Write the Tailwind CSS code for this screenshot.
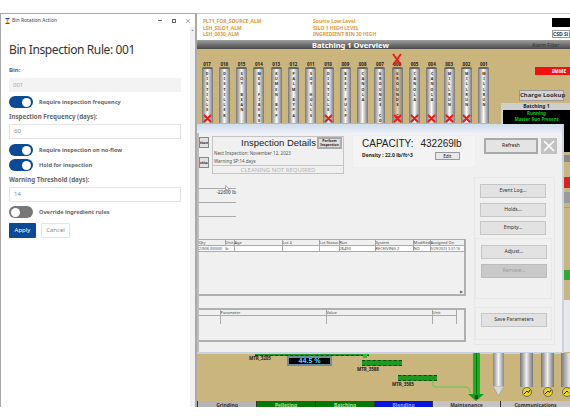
<!DOCTYPE html>
<html lang="en">
<head>
<meta charset="UTF-8" />
<title>Bin Rotation Action</title>
<script src="https://cdn.jsdelivr.net/npm/@tailwindcss/browser@4"></script>
</head>
<body class="bg-white w-[570px] h-[420px] overflow-hidden font-['Noto_Sans',sans-serif]">
<div class="flex pt-[13px] h-[407px]">

  <!-- Rule form window -->
  <div class="w-[197px] shrink-0 h-full border-t border-l border-r-2 border-[#a9a9a9] bg-white flex flex-col">
    <div class="h-[13px] flex items-center pl-[4px] pr-[2px] text-[5px] text-[#444]">
      <svg class="w-[5px] h-[6px] mr-[2px]" viewBox="0 0 10 12"><path d="M1 0h8L6 6l3 6H1l3-6z" fill="#d9a520"/><path d="M1 0h8v2H1zM1 10h8v2H1z" fill="#2f4f8f"/></svg>
      <span>Bin Rotation Action</span>
      <div class="ml-auto flex items-center gap-[10px] pr-[3px] text-[#555]">
        <span class="w-[4px] h-px bg-[#666]"></span>
        <span class="w-[4px] h-[4px] border border-[#666]"></span>
        <svg class="w-[4px] h-[4px]" viewBox="0 0 8 8"><path d="M0 0l8 8M8 0L0 8" stroke="#555"/></svg>
      </div>
    </div>
    <div class="flex flex-1">
      <div class="flex-1 pl-[8px] pr-[9px] pt-[15px]">
        <h1 class="text-[12px] leading-[16px] tracking-[-0.4px] text-[#333] mb-[8px] whitespace-nowrap">Bin Inspection Rule: 001</h1>
        <label class="block text-[6px] font-bold text-[#666] leading-[8px] mb-[4px]">Bin:</label>
        <div class="h-[14px] bg-[#f3f3f3] pl-[4px] text-[6px] leading-[14px] text-[#aaa] mb-[4px]">001</div>
        <div class="flex items-center gap-[6px] mb-[5px]">
          <span class="w-[24px] h-[12px] rounded-full bg-[#0b4a94] flex justify-end items-center px-[2px]"><span class="w-[9px] h-[9px] rounded-full bg-white"></span></span>
          <span class="text-[5.6px] font-bold text-[#666]">Require inspection frequency</span>
        </div>
        <label class="block text-[6.2px] font-bold text-[#666] leading-[8px] mb-[3px]">Inspection Frequency (days):</label>
        <div class="h-[15px] border border-[#e4e4e4] pl-[4px] text-[6px] leading-[13px] text-[#888] mb-[5px]">60</div>
        <div class="flex items-center gap-[6px] mb-[3px]">
          <span class="w-[24px] h-[12px] rounded-full bg-[#0b4a94] flex justify-end items-center px-[2px]"><span class="w-[9px] h-[9px] rounded-full bg-white"></span></span>
          <span class="text-[5.6px] font-bold text-[#666]">Require inspection on no-flow</span>
        </div>
        <div class="flex items-center gap-[6px] mb-[5px]">
          <span class="w-[24px] h-[12px] rounded-full bg-[#0b4a94] flex justify-end items-center px-[2px]"><span class="w-[9px] h-[9px] rounded-full bg-white"></span></span>
          <span class="text-[5.6px] font-bold text-[#666]">Hold for inspection</span>
        </div>
        <label class="block text-[6.2px] font-bold text-[#666] leading-[8px] mb-[3px]">Warning Threshold (days):</label>
        <div class="h-[15px] border border-[#e4e4e4] pl-[4px] text-[6px] leading-[13px] text-[#888] mb-[4px]">14</div>
        <div class="flex items-center gap-[6px] mb-[5px]">
          <span class="w-[24px] h-[12px] rounded-full bg-[#777] flex items-center px-[2px]"><span class="w-[9px] h-[9px] rounded-full bg-white"></span></span>
          <span class="text-[5.6px] font-bold text-[#666]">Override ingredient rules</span>
        </div>
        <div class="flex gap-[5px]">
          <button class="w-[27px] h-[15px] bg-[#0b4a94] text-white text-[6px] rounded-[1px]">Apply</button>
          <button class="w-[29px] h-[15px] border border-[#e6e6e6] text-[#888] text-[6px] rounded-[1px]">Cancel</button>
        </div>
      </div>
      <div class="w-[5px] bg-[#f1f1f1] flex justify-center pt-[1px]"><span class="text-[3px] text-[#888]">▲</span></div>
    </div>
  </div>

  <!-- Plant overview behind the details dialog -->
  <div class="relative flex-1 flex flex-col h-full bg-[#cab57c]">
    <div class="h-[27px] bg-white border-t border-[#c8c8c8] flex pl-[6px] pt-[4px] text-[5px] leading-[6.5px] font-bold text-[#e39a35] shrink-0">
      <div class="w-[110px]"><p>PLT1_FOR_SOURCE_ALM</p><p>LSH_SILO1_ALM</p><p>LSH_0030_ALM</p></div>
      <div><p>Source Low Level</p><p>SILO 1 HIGH LEVEL</p><p>INGREDIENT BIN 30 HIGH</p></div>
    </div>
    <div class="h-[9px] bg-gradient-to-b from-[#a0a0a0] to-[#4a4a4a] shrink-0 text-white text-[7.5px] font-bold leading-[10px] pl-[115px] whitespace-nowrap">Batching 1 Overview</div>

    <!-- bins -->
    <div class="flex pl-[5px] pt-[12px] gap-[7.3px] h-[74px] shrink-0">
      <div class="w-[10px] flex flex-col items-center"><span class="text-[4.5px] font-bold leading-[6px] text-[#222]">017</span><div class="relative w-[11px] h-[56px] rounded-t-[2px] border-t-2 border-[#666] bg-gradient-to-r from-[#777] via-[#fafafa] to-[#777] flex justify-center overflow-hidden pt-[2px]"><span class="[writing-mode:vertical-rl] [text-orientation:upright] text-[3.5px] font-bold tracking-[0.2px] text-[#222]">DISTILLE</span><svg class="absolute bottom-0 left-[1px] w-[9px] h-[9px]" viewBox="0 0 9 9"><path d="M1 1l7 7M8 1L1 8" stroke="#f01818" stroke-width="2"/></svg></div></div>
      <div class="w-[10px] flex flex-col items-center"><span class="text-[4.5px] font-bold leading-[6px] text-[#222]">016</span><div class="w-[11px] h-[56px] rounded-t-[2px] border-t-2 border-[#666] bg-gradient-to-r from-[#777] via-[#fafafa] to-[#777] flex justify-center overflow-hidden pt-[2px]"><span class="[writing-mode:vertical-rl] [text-orientation:upright] text-[3.5px] font-bold tracking-[0.2px] text-[#222]">DISTILLER</span></div></div>
      <div class="w-[10px] flex flex-col items-center"><span class="text-[4.5px] font-bold leading-[6px] text-[#222]">015</span><div class="w-[11px] h-[56px] rounded-t-[2px] border-t-2 border-[#666] bg-gradient-to-r from-[#777] via-[#fafafa] to-[#777] flex justify-center overflow-hidden pt-[2px]"><span class="[writing-mode:vertical-rl] [text-orientation:upright] text-[3.5px] font-bold tracking-[0.2px] text-[#222]">SOY BEAN</span></div></div>
      <div class="w-[10px] flex flex-col items-center"><span class="text-[4.5px] font-bold leading-[6px] text-[#222]">014</span><div class="w-[11px] h-[56px] rounded-t-[2px] border-t-2 border-[#666] bg-gradient-to-r from-[#777] via-[#fafafa] to-[#777] flex justify-center overflow-hidden pt-[2px]"><span class="[writing-mode:vertical-rl] [text-orientation:upright] text-[3.5px] font-bold tracking-[0.2px] text-[#222]">MEG FIBERS</span></div></div>
      <div class="w-[10px] flex flex-col items-center"><span class="text-[4.5px] font-bold leading-[6px] text-[#222]">013</span><div class="w-[11px] h-[56px] rounded-t-[2px] border-t-2 border-[#666] bg-gradient-to-r from-[#777] via-[#fafafa] to-[#777] flex justify-center overflow-hidden pt-[2px]"><span class="[writing-mode:vertical-rl] [text-orientation:upright] text-[3.5px] font-bold tracking-[0.2px] text-[#222]">KUMEN BYP</span></div></div>
      <div class="w-[10px] flex flex-col items-center"><span class="text-[4.5px] font-bold leading-[6px] text-[#222]">012</span><div class="w-[11px] h-[56px] rounded-t-[2px] border-t-2 border-[#666] bg-gradient-to-r from-[#777] via-[#fafafa] to-[#777] flex justify-center overflow-hidden pt-[2px]"><span class="[writing-mode:vertical-rl] [text-orientation:upright] text-[3.5px] font-bold tracking-[0.2px] text-[#222]">PALM BYPA</span></div></div>
      <div class="w-[10px] flex flex-col items-center"><span class="text-[4.5px] font-bold leading-[6px] text-[#222]">011</span><div class="w-[11px] h-[56px] rounded-t-[2px] border-t-2 border-[#666] bg-gradient-to-r from-[#777] via-[#fafafa] to-[#777] flex justify-center overflow-hidden pt-[2px]"><span class="[writing-mode:vertical-rl] [text-orientation:upright] text-[3.5px] font-bold tracking-[0.2px] text-[#222]">SOY HULLS</span></div></div>
      <div class="w-[10px] flex flex-col items-center"><span class="text-[4.5px] font-bold leading-[6px] text-[#222]">010</span><div class="relative w-[11px] h-[56px] rounded-t-[2px] border-t-2 border-[#666] bg-gradient-to-r from-[#777] via-[#fafafa] to-[#777] flex justify-center overflow-hidden pt-[2px]"><span class="[writing-mode:vertical-rl] [text-orientation:upright] text-[3.5px] font-bold tracking-[0.2px] text-[#222]">DISTILLE</span><svg class="absolute bottom-0 left-[1px] w-[9px] h-[9px]" viewBox="0 0 9 9"><path d="M1 1l7 7M8 1L1 8" stroke="#f01818" stroke-width="2"/></svg></div></div>
      <div class="w-[10px] flex flex-col items-center"><span class="text-[4.5px] font-bold leading-[6px] text-[#222]">009</span><div class="w-[11px] h-[56px] rounded-t-[2px] border-t-2 border-[#666] bg-gradient-to-r from-[#777] via-[#fafafa] to-[#777] flex justify-center overflow-hidden pt-[2px]"><span class="[writing-mode:vertical-rl] [text-orientation:upright] text-[3.5px] font-bold tracking-[0.2px] text-[#222]">BEET PULP</span></div></div>
      <div class="w-[10px] flex flex-col items-center"><span class="text-[4.5px] font-bold leading-[6px] text-[#222]">008</span><div class="w-[11px] h-[56px] rounded-t-[2px] border-t-2 border-[#666] bg-gradient-to-r from-[#777] via-[#fafafa] to-[#777] flex justify-center overflow-hidden pt-[2px]"><span class="[writing-mode:vertical-rl] [text-orientation:upright] text-[3.5px] font-bold tracking-[0.2px] text-[#222]">CANOLA</span></div></div>
      <div class="w-[10px] flex flex-col items-center"><span class="text-[4.5px] font-bold leading-[6px] text-[#222]">007</span><div class="w-[11px] h-[56px] rounded-t-[2px] border-t-2 border-[#666] bg-gradient-to-r from-[#777] via-[#fafafa] to-[#777] flex justify-center overflow-hidden pt-[2px]"><span class="[writing-mode:vertical-rl] [text-orientation:upright] text-[3.5px] font-bold tracking-[0.2px] text-[#222]">GROUNDS CO</span></div></div>
      <div class="w-[10px] flex flex-col items-center relative"><svg class="absolute -top-[8px] left-[-1px] w-[12px] h-[13px]" viewBox="0 0 12 13"><path d="M2 1l8 11M10 1L2 12" stroke="#f01818" stroke-width="2"/></svg><span class="text-[4.5px] font-bold leading-[6px] text-[#222]">006</span><div class="relative w-[11px] h-[56px] rounded-t-[2px] border-t-2 border-[#666] bg-gradient-to-r from-[#777] via-[#e8cfa0] to-[#777] flex justify-center overflow-hidden pt-[2px]"><span class="[writing-mode:vertical-rl] [text-orientation:upright] text-[3.5px] font-bold tracking-[0.2px] text-[#222]">GROUNDS C</span><svg class="absolute bottom-0 left-[1px] w-[9px] h-[9px]" viewBox="0 0 9 9"><path d="M1 1l7 7M8 1L1 8" stroke="#f01818" stroke-width="2"/></svg></div></div>
      <div class="w-[10px] flex flex-col items-center"><span class="text-[4.5px] font-bold leading-[6px] text-[#222]">005</span><div class="relative w-[11px] h-[56px] rounded-t-[2px] border-t-2 border-[#666] bg-gradient-to-r from-[#777] via-[#fafafa] to-[#777] flex justify-center overflow-hidden pt-[2px]"><span class="[writing-mode:vertical-rl] [text-orientation:upright] text-[3.5px] font-bold tracking-[0.2px] text-[#222]">CANOLA</span><svg class="absolute bottom-0 left-[1px] w-[9px] h-[9px]" viewBox="0 0 9 9"><path d="M1 1l7 7M8 1L1 8" stroke="#f01818" stroke-width="2"/></svg></div></div>
      <div class="w-[10px] flex flex-col items-center"><span class="text-[4.5px] font-bold leading-[6px] text-[#222]">004</span><div class="relative w-[11px] h-[56px] rounded-t-[2px] border-t-2 border-[#666] bg-gradient-to-r from-[#777] via-[#fafafa] to-[#777] flex justify-center overflow-hidden pt-[2px]"><span class="[writing-mode:vertical-rl] [text-orientation:upright] text-[3.5px] font-bold tracking-[0.2px] text-[#222]">CANOLA</span><svg class="absolute bottom-0 left-[1px] w-[9px] h-[9px]" viewBox="0 0 9 9"><path d="M1 1l7 7M8 1L1 8" stroke="#f01818" stroke-width="2"/></svg></div></div>
      <div class="w-[10px] flex flex-col items-center"><span class="text-[4.5px] font-bold leading-[6px] text-[#222]">003</span><div class="relative w-[11px] h-[56px] rounded-t-[2px] border-t-2 border-[#666] bg-gradient-to-r from-[#777] via-[#fafafa] to-[#777] flex justify-center overflow-hidden pt-[2px]"><span class="[writing-mode:vertical-rl] [text-orientation:upright] text-[3.5px] font-bold tracking-[0.2px] text-[#222]">MILLRUN</span><svg class="absolute bottom-0 left-[1px] w-[9px] h-[9px]" viewBox="0 0 9 9"><path d="M1 1l7 7M8 1L1 8" stroke="#f01818" stroke-width="2"/></svg></div></div>
      <div class="w-[10px] flex flex-col items-center"><span class="text-[4.5px] font-bold leading-[6px] text-[#222]">002</span><div class="relative w-[11px] h-[56px] rounded-t-[2px] border-t-2 border-[#666] bg-gradient-to-r from-[#777] via-[#fafafa] to-[#777] flex justify-center overflow-hidden pt-[2px]"><span class="[writing-mode:vertical-rl] [text-orientation:upright] text-[3.5px] font-bold tracking-[0.2px] text-[#222]">MILLRUN</span><svg class="absolute bottom-0 left-[1px] w-[9px] h-[9px]" viewBox="0 0 9 9"><path d="M1 1l7 7M8 1L1 8" stroke="#f01818" stroke-width="2"/></svg></div></div>
      <div class="w-[10px] flex flex-col items-center"><span class="text-[4.5px] font-bold leading-[6px] text-[#222]">001</span><div class="w-[11px] h-[56px] rounded-t-[2px] border-t-2 border-[#666] bg-gradient-to-r from-[#777] via-[#fafafa] to-[#777] flex justify-center overflow-hidden pt-[2px]"><span class="[writing-mode:vertical-rl] [text-orientation:upright] text-[3.5px] font-bold tracking-[0.2px] text-[#222]">MILLRUN</span></div></div>
    </div>

    <!-- space the dialog covers, then the tab strip -->
    <div class="flex-1"></div>
    <div class="h-[6px] flex gap-[1px] bg-[#333] shrink-0 text-[5px] font-bold leading-[8px] text-center overflow-hidden pl-[1px]">
      <div class="w-[58px] bg-[#b5b5b5] text-[#333]">Grinding</div>
      <div class="w-[58px] bg-[#067806] text-[#9fe39f]">Pelleting</div>
      <div class="w-[58px] bg-[#067806] text-[#9fe39f]">Batching</div>
      <div class="w-[57px] bg-[#0a14e0] text-[#8fa0ff]">Blending</div>
      <div class="w-[67px] bg-[#c4c4c4] text-[#333]">Maintenance</div>
      <div class="flex-1 bg-[#c4c4c4] text-[#333]">Communications</div>
    </div>

    <!-- right-hand widgets of the overview -->
    <div class="absolute left-[355px] top-[5px] w-[18px] h-[9px] bg-black"></div>
    <div class="absolute left-[355px] top-[17px] w-[18px] h-[8px] bg-white border border-[#999] text-[5px] leading-[6px] font-bold whitespace-nowrap overflow-hidden text-[#333]">CSD Si</div>
    <span class="absolute left-[335px] top-[29px] text-[5px] text-[#333] whitespace-nowrap">Alarm Filter</span>
    <div class="absolute left-[338px] top-[54px] w-[35px] h-[8px] bg-[#f51010] text-white text-[5px] font-bold leading-[8px] pl-[17px]">IMME</div>
    <button class="absolute left-[322px] top-[77px] w-[45px] h-[11px] bg-[#d4d4d4] border border-[#999] text-[6px] font-bold text-[#333] whitespace-nowrap">Charge Lookup</button>
    <div class="absolute left-[304px] top-[90px] w-[69px] h-[49px] bg-[#cfcfcf] pt-[1px] pl-[2px]">
      <p class="text-[5px] font-bold leading-[5px] text-center text-[#222]">Batching 1</p>
      <div class="bg-black h-[42px] mt-[1px] text-center text-[4.5px] font-bold leading-[6px] text-[#10c020]"><p>Running</p><p>Master Run Present</p></div>
    </div>
    <div class="absolute left-[367px] top-[142px] w-[6px] h-[7px] bg-[#8a8a8a]"></div>
    <div class="absolute left-[367px] top-[164px] w-[6px] h-[11px] bg-[#e02020]"></div>
    <div class="absolute left-[367px] top-[179px] w-[6px] h-[11px] bg-[#9a9a9a]"></div>
    <div class="absolute left-[367px] top-[194px] w-[6px] h-px bg-[#58d050]"></div>
    <div class="absolute left-[367px] top-[257px] w-[6px] h-[10px] bg-[#2faa2f]"></div>
    <div class="absolute left-[367px] top-[287px] w-[6px] h-[52px] bg-[#e8e8e8]"></div>

    <!-- details dialog -->
    <div class="absolute left-0 top-[111px] w-[367px] h-[230px] bg-[#f0f0f0] border-r-2 border-b-2 border-[#c7d3e0] flex flex-col">
      <div class="h-[9px] bg-gradient-to-b from-[#cfdcea] to-[#e9eff5] shrink-0"></div>
      <div class="flex-1 relative text-[#222] border-l-2 border-[#bdbdbd]">
        <div class="absolute left-0 top-[4px] w-[10px] h-[11px] bg-[#e2e2e2] border border-[#888] text-[4px] font-bold leading-[9px] text-right overflow-hidden">tion</div>
        <div class="absolute left-0 top-[24px] w-[10px] h-[11px] bg-[#e2e2e2] border border-[#888] text-[4px] font-bold leading-[9px] text-right overflow-hidden">ction</div>

        <div class="absolute left-[13px] top-[3px] w-[132px] h-[38px] border border-[#c4c4c4] flex flex-col">
          <div class="h-[28px] relative pl-[1px] text-[#555] text-[4.5px] leading-[8px]">
            <p class="text-[9.5px] leading-[12px] text-center text-[#222] font-['Liberation_Sans',sans-serif]">Inspection Details</p>
            <p class="whitespace-nowrap">Next Inspection: November 12, 2023</p>
            <p class="whitespace-nowrap">Warning SP:14 days</p>
            <button class="absolute right-[1px] top-[0px] w-[25px] h-[12px] bg-[#dedede] border-2 border-[#aaa] text-[3.5px] font-bold leading-[4px] text-[#222]">Perform Inspection</button>
          </div>
          <div class="flex-1 border-t border-[#c4c4c4] text-center text-[#b5b5b5] text-[6px] leading-[8px] whitespace-nowrap">CLEANING NOT REQUIRED</div>
        </div>

        <div class="absolute left-[153px] top-[2px] w-[124px] h-[33px] bg-[#f3f3f3] border border-[#eeeeee] pl-[9px] pt-[1px]">
          <p class="text-[10px] leading-[13px] text-[#222] font-['Liberation_Sans',sans-serif] whitespace-nowrap">CAPACITY:<span class="ml-[7px]">432269lb</span></p>
          <div class="flex items-center mt-[2px] gap-[22px]"><span class="text-[5px] font-bold whitespace-nowrap">Density : 22.0 lb/ft^3</span><button class="w-[25px] h-[8px] bg-[#e8e8e8] border border-[#999] text-[4.5px] leading-[5px]">Edit</button></div>
        </div>

        <button class="absolute left-[285px] top-[5px] w-[54px] h-[16px] bg-[#e4e4e4] border-2 border-[#aaa] text-[5px]">Refresh</button>
        <button class="absolute left-[342px] top-[5px] w-[16px] h-[16px] bg-[#c2c2c2] flex items-center justify-center"><svg class="w-[12px] h-[12px]" viewBox="0 0 12 12"><path d="M1 1l10 10M11 1L1 11" stroke="#fff" stroke-width="1.6"/></svg></button>

        <!-- weight lines -->
        <div class="absolute left-0 top-[55px] w-[37px] h-[14px] border-t border-[#aaa] text-[4.5px] leading-[7px] text-right text-[#333]">-22600 lb</div>
        <div class="absolute left-0 top-[69px] w-[37px] h-[14px] border-t border-[#aaa]"></div>
        <div class="absolute left-0 top-[83px] w-[37px] border-t border-[#aaa]"></div>
        <svg class="absolute left-[26px] top-[52px] w-[5px] h-[7px]" viewBox="0 0 5 7"><path d="M.5.5v5l1.3-1.2L3 6.5l1-.5-1-2h1.6z" fill="#fff" stroke="#666" stroke-width=".5"/></svg>

        <!-- lot table -->
        <div class="absolute left-0 top-[106px] w-[267px] h-[57px] border-r-2 border-b-2 border-[#b0b0b0]">
          <table class="w-[266px] table-fixed text-[4px] leading-[5px] border-collapse text-[#444]">
            <thead><tr class="border-y border-[#aaa]">
              <th class="font-normal text-left w-[26px] border-r border-[#aaa]">Qty</th>
              <th class="font-normal text-left w-[9px] border-r border-[#aaa]">Unit</th>
              <th class="font-normal text-left w-[48px] border-r border-[#aaa]">Age</th>
              <th class="font-normal text-left w-[37px] border-r border-[#aaa]">Lot #</th>
              <th class="font-normal text-left w-[20px] border-r border-[#aaa]">Lot Status</th>
              <th class="font-normal text-left w-[36px] border-r border-[#aaa]">Run</th>
              <th class="font-normal text-left w-[38px] border-r border-[#aaa]">System</th>
              <th class="font-normal text-left w-[17px] border-r border-[#aaa]">Modified</th>
              <th class="font-normal text-left border-r border-[#aaa] overflow-hidden whitespace-nowrap">Assigned On</th>
            </tr></thead>
            <tbody class="bg-white"><tr class="border-b border-[#aaa]">
              <td class="overflow-hidden whitespace-nowrap text-[3.5px]">22606.000000</td>
              <td class="border-r border-[#aaa]">lb</td>
              <td class="border-r border-[#aaa]"></td>
              <td class="border-r border-[#aaa]"></td>
              <td class="border-r border-[#aaa]"></td>
              <td class="border-r border-[#aaa]">26490</td>
              <td class="border-r border-[#aaa]">RECEIVING 2</td>
              <td class="border-r border-[#aaa]">NO</td>
              <td class="border-r border-[#aaa] overflow-hidden whitespace-nowrap text-[3.5px]">9/29/2023 3:37:16</td>
            </tr></tbody>
          </table>
          <span class="absolute right-[1px] bottom-0 text-[4px] leading-[5px] text-[#666]">▶</span>
        </div>

        <!-- parameter table -->
        <div class="absolute left-0 top-[175px] w-[267px] h-[34px] border-r-2 border-y-2 border-[#b0b0b0]">
          <table class="w-[258px] table-fixed text-[4px] leading-[5px] border-collapse text-[#444]">
            <thead><tr class="border-b border-[#aaa]">
              <th class="font-normal text-left w-[21px]"></th>
              <th class="font-normal text-left w-[106px] border-x border-[#aaa]">Parameter</th>
              <th class="font-normal text-left w-[106px] border-r border-[#aaa]">Value</th>
              <th class="font-normal text-left border-r border-[#aaa]">Unit</th>
            </tr></thead>
            <tbody><tr class="h-[8px]"><td></td><td class="border-x border-[#aaa]"></td><td class="border-r border-[#aaa]"></td><td class="border-r border-[#aaa]"></td></tr></tbody>
          </table>
        </div>

        <!-- side actions -->
        <div class="absolute left-[275px] top-[44px] w-[81px] h-[168px] border border-[#e8e8e8] flex flex-col pl-[5px] pt-[6px] text-[5px] text-[#333]">
          <button class="w-[66px] h-[14px] bg-[#e2e2e2] border border-[#c6c6c6]">Event Log...</button>
          <button class="w-[66px] h-[14px] mt-[5px] bg-[#e2e2e2] border border-[#c6c6c6]">Holds...</button>
          <button class="w-[66px] h-[14px] mt-[4px] bg-[#e2e2e2] border border-[#c6c6c6]">Empty...</button>
          <div class="-ml-[5px] mt-[3px] w-[77px] h-[61px] border border-[#e8e8e8] pl-[5px] pt-[6px]">
            <button class="block w-[66px] h-[14px] bg-[#e2e2e2] border border-[#c6c6c6]">Adjust...</button>
            <button class="block w-[66px] h-[14px] mt-[5px] bg-[#c9c9c9] border border-[#bcbcbc] text-[#999]">Remove...</button>
          </div>
          <div class="-ml-[5px] mt-[8px] w-[77px] h-[33px] border border-[#e8e8e8] pl-[5px] pt-[5px]">
            <button class="block w-[66px] h-[14px] bg-[#e2e2e2] border border-[#c6c6c6]">Save Parameters</button>
          </div>
        </div>
      </div>
    </div>

    <!-- lower overview: conveyors, gauge, silos -->
    <div class="absolute left-[58px] top-[341px] w-[114px] h-[2px] bg-[#1f9a1f] border-b border-dashed border-[#0c4a0c]"></div>
    <div class="absolute left-[166px] top-[341px] w-[4px] h-[4px] bg-[#2cc02c]"></div>
    <span class="absolute left-[52px] top-[342px] text-[4.5px] font-bold text-[#222]">MTR_3205</span>
    <div class="absolute left-[90px] top-[343px] w-[45px] h-[10px] bg-black border-2 border-[#6c8c98] text-[#2fd8f0] text-[7px] font-bold text-center leading-[6px]">44.5 %</div>
    <div class="absolute left-[165px] top-[347px] w-[40px] h-[6px] bg-[#1f9a1f] border-y border-dashed border-[#0c4a0c]"></div>
    <span class="absolute left-[160px] top-[353px] text-[4.5px] font-bold text-[#222]">MTR_3588</span>
    <div class="absolute left-[201px] top-[362px] w-[39px] h-[6px] bg-[#1f9a1f] border-y border-dashed border-[#0c4a0c]"></div>
    <span class="absolute left-[195px] top-[368px] text-[4.5px] font-bold text-[#222]">MTR_3585</span>
    <svg class="absolute left-[230px] top-[340px] w-[70px] h-[60px]" viewBox="0 0 70 60">
      <path d="M6 28v4q0 2 3 2h29q5 0 5 6" fill="none" stroke="#58d050" stroke-width="1"/>
      <path d="M49.500 0v41" stroke="#0fb81a" stroke-width="7"/>
      <path d="M49.500 0v41" stroke="#0a6d10" stroke-width="1"/>
      <path d="M41 41h16l-8 7z" fill="#10a020"/>
      <path d="M48 42h3v4h-3z" fill="#054005"/>
    </svg>
    <div class="absolute left-[296px] top-[340px] w-[11px] h-[33px] bg-gradient-to-r from-[#888] via-[#f4f4f4] to-[#888]"></div>
    <svg class="absolute left-[296px] top-[373px] w-[11px] h-[10px]" viewBox="0 0 11 10"><path d="M0 0h11L5.500 10z" fill="#d8d8d8" stroke="#999" stroke-width=".6"/></svg>
    <div class="absolute left-[323px] top-[340px] w-[13px] h-[34px] bg-gradient-to-r from-[#777] via-[#eeeeee] to-[#777]"></div>
    <svg class="absolute left-[325px] top-[374px] w-[10px] h-[10px]" viewBox="0 0 10 10"><circle cx="5" cy="5" r="4.500" fill="#e8d41c" stroke="#333" stroke-width=".6"/><path d="M2 7l3-3 1.500 1.500L8 3" fill="none" stroke="#222"/></svg>
    <div class="absolute left-[344px] top-[340px] w-[13px] h-[34px] bg-gradient-to-r from-[#777] via-[#eeeeee] to-[#777]"></div>
    <svg class="absolute left-[346px] top-[374px] w-[10px] h-[10px]" viewBox="0 0 10 10"><circle cx="5" cy="5" r="4.500" fill="#e8d41c" stroke="#333" stroke-width=".6"/><path d="M2 7l3-3 1.500 1.500L8 3" fill="none" stroke="#222"/></svg>
    <div class="absolute left-[364px] top-[340px] w-[9px] h-[34px] bg-gradient-to-r from-[#777] to-[#eeeeee]"></div>
    <svg class="absolute left-[365px] top-[374px] w-[8px] h-[10px]" viewBox="0 0 8 10"><circle cx="5" cy="5" r="4.500" fill="#e8d41c" stroke="#333" stroke-width=".6"/><path d="M2 7l3-3 1.500 1.500" fill="none" stroke="#222"/></svg>
  </div>
</div>
</body>
</html>
